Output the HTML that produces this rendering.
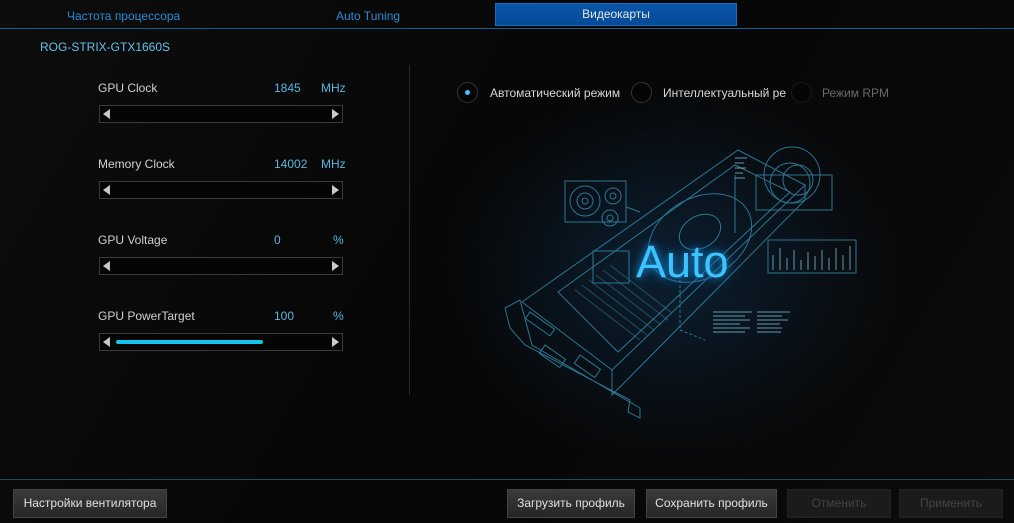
<!DOCTYPE html>
<html><head><meta charset="utf-8"><style>
*{margin:0;padding:0;box-sizing:border-box}
body{width:1014px;height:523px;overflow:hidden;background:#070707;font-family:"Liberation Sans",sans-serif;position:relative;color:#c8c8c8}
.bg{position:absolute;inset:0;background:radial-gradient(ellipse 230px 190px at 670px 270px,#0d2030 0%,#09141e 45%,rgba(7,7,7,0) 100%),linear-gradient(120deg,#0d0d0d,#060606 50%,#0b0b0b)}
.a{position:absolute;white-space:nowrap}
.tab{font-size:12px;color:#2c8ad6;top:9px}
.act{left:495px;top:3px;width:242px;height:23px;background:linear-gradient(#0a56a8,#054a96);border:1px solid #1a6cc0;color:#e6e6e6;font-size:12px;text-align:center;line-height:21px}
.hl{left:0;top:28px;width:1014px;height:1px;background:#1a5a8c}
.lab{font-size:12px;color:#cfcfcf;left:98px}
.val{font-size:12px;color:#55b8e0}
.sl{left:99px;width:244px;height:18px;border:1px solid #3a3a3a;background:#050505}
.sl:before{content:"";position:absolute;left:3px;top:3px;border-right:7px solid #c8c8c8;border-top:5px solid transparent;border-bottom:5px solid transparent}
.sl:after{content:"";position:absolute;right:3px;top:3px;border-left:7px solid #c8c8c8;border-top:5px solid transparent;border-bottom:5px solid transparent}
.rad{width:21px;height:21px;border-radius:50%;border:1px solid #333;background:#050505}
.rt{font-size:12px;top:86px}
.btn{top:489px;height:29px;background:linear-gradient(#3a3a3a,#262626);border:1px solid #444;font-size:12px;color:#e0e0e0;text-align:center;line-height:27px}
.dis{background:#1b1b1b;border-color:#222;color:#444}
</style></head><body>
<div class="bg"></div>
<div class="a tab" style="left:67px">Частота процессора</div>
<div class="a tab" style="left:336px">Auto Tuning</div>
<div class="a act">Видеокарты</div>
<div class="a hl"></div>
<div class="a" style="left:40px;top:40px;font-size:12px;color:#66c0e8">ROG-STRIX-GTX1660S</div>

<div class="a lab" style="top:81px">GPU Clock</div><div class="a val" style="left:274px;top:81px">1845</div><div class="a val" style="left:321px;top:81px">MHz</div>
<div class="a sl" style="top:105px"></div>
<div class="a lab" style="top:157px">Memory Clock</div><div class="a val" style="left:274px;top:157px">14002</div><div class="a val" style="left:321px;top:157px">MHz</div>
<div class="a sl" style="top:181px"></div>
<div class="a lab" style="top:233px">GPU Voltage</div><div class="a val" style="left:274px;top:233px">0</div><div class="a val" style="left:333px;top:233px">%</div>
<div class="a sl" style="top:257px"></div>
<div class="a lab" style="top:309px">GPU PowerTarget</div><div class="a val" style="left:274px;top:309px">100</div><div class="a val" style="left:333px;top:309px">%</div>
<div class="a sl" style="top:333px"><div style="position:absolute;left:16px;top:6px;width:147px;height:4px;background:#12c4ea;border-radius:2px"></div></div>

<div class="a" style="left:409px;top:65px;width:1px;height:330px;background:#2a2a2a"></div>

<div class="a rad" style="left:457px;top:82px"><div style="position:absolute;left:7px;top:7px;width:5px;height:5px;border-radius:50%;background:#3cc4ff"></div></div>
<div class="a rt" style="left:490px;color:#d8d8d8">Автоматический режим</div>
<div class="a rad" style="left:631px;top:82px"></div>
<div class="a rt" style="left:663px;color:#d8d8d8">Интеллектуальный ре</div>
<div class="a rad" style="left:791px;top:82px;border-color:#1a1a1a"></div>
<div class="a rt" style="left:822px;color:#6a6a6a">Режим RPM</div>

<svg class="a" style="left:0;top:0" width="1014" height="523" viewBox="0 0 1014 523">
<g fill="none" stroke="#3d9fc4" stroke-width="1" opacity="0.7">
<polygon points="522,302 738,150 805,185 612,370"/>
<polygon points="558,292 735,165 790,192 618,352"/>
<polyline points="612,370 612,395 805,200 805,185"/>
<polyline points="505,308 520,300 532,345 640,408 640,418 628,412 630,400 525,345 510,328 505,308"/>
<rect x="530" y="312" width="30" height="8" transform="rotate(35 530 312)"/>
<rect x="545" y="345" width="25" height="10" transform="rotate(35 545 345)"/>
<rect x="580" y="355" width="25" height="10" transform="rotate(35 580 355)"/>
<ellipse cx="700" cy="238" rx="55" ry="40" transform="rotate(-30 700 238)"/>
<ellipse cx="700" cy="232" rx="22" ry="16" transform="rotate(-30 700 232)"/>
<rect x="565" y="181" width="61" height="41"/>
<circle cx="585" cy="201" r="15"/><circle cx="585" cy="201" r="8"/><circle cx="585" cy="201" r="3"/>
<circle cx="613" cy="196" r="8"/><circle cx="613" cy="196" r="3"/>
<circle cx="610" cy="218" r="8"/><circle cx="610" cy="218" r="3"/>
<line x1="626" y1="207" x2="640" y2="212"/>
<rect x="756" y="175" width="76" height="35"/>
<circle cx="792" cy="175" r="28"/><circle cx="790" cy="183" r="20"/><circle cx="798" cy="180" r="15"/>
<line x1="735" y1="175" x2="735" y2="233"/>
<line x1="680" y1="275" x2="680" y2="330" stroke-dasharray="3,2"/>
<line x1="680" y1="330" x2="705" y2="340" stroke-dasharray="3,2"/>
<rect x="593" y="251" width="36" height="32"/>
<rect x="768" y="240" width="88" height="33"/>
<path d="M575 290 L640 340 M582 285 L647 335 M589 280 L654 330 M596 275 L661 325 M603 270 L668 320 M610 265 L672 313" opacity="0.6"/>
</g>
<g stroke="#8fd0e8" stroke-width="1" opacity="0.7">
<line x1="773" y1="270" x2="773" y2="255"/><line x1="780" y1="270" x2="780" y2="248"/><line x1="787" y1="270" x2="787" y2="258"/><line x1="794" y1="270" x2="794" y2="250"/><line x1="801" y1="270" x2="801" y2="260"/><line x1="808" y1="270" x2="808" y2="252"/><line x1="815" y1="270" x2="815" y2="256"/><line x1="822" y1="270" x2="822" y2="250"/><line x1="829" y1="270" x2="829" y2="258"/><line x1="836" y1="270" x2="836" y2="248"/><line x1="843" y1="270" x2="843" y2="255"/><line x1="850" y1="270" x2="850" y2="246"/>
<line x1="713" y1="312" x2="752" y2="312"/><line x1="713" y1="316" x2="745" y2="316"/><line x1="713" y1="320" x2="750" y2="320"/><line x1="713" y1="324" x2="740" y2="324"/><line x1="713" y1="328" x2="750" y2="328"/><line x1="713" y1="332" x2="745" y2="332"/>
<line x1="757" y1="312" x2="790" y2="312"/><line x1="757" y1="316" x2="782" y2="316"/><line x1="757" y1="320" x2="788" y2="320"/><line x1="757" y1="324" x2="780" y2="324"/><line x1="757" y1="328" x2="782" y2="328"/><line x1="757" y1="332" x2="781" y2="332"/>
<line x1="735" y1="158" x2="747" y2="158"/><line x1="735" y1="163" x2="744" y2="163"/><line x1="735" y1="168" x2="746" y2="168"/><line x1="735" y1="173" x2="743" y2="173"/><line x1="735" y1="178" x2="745" y2="178"/>
</g>
</svg>
<div class="a" style="left:636px;top:236px;font-size:45px;color:#3cc4ff;text-shadow:0 0 8px #1a8ad0,0 0 16px #0a5a9a">Auto</div>

<div class="a" style="left:0;top:479px;width:1014px;height:1px;background:#1a4a6c"></div>
<div class="a btn" style="left:13px;width:154px">Настройки вентилятора</div>
<div class="a btn" style="left:507px;width:128px">Загрузить профиль</div>
<div class="a btn" style="left:646px;width:131px">Сохранить профиль</div>
<div class="a btn dis" style="left:787px;width:104px">Отменить</div>
<div class="a btn dis" style="left:899px;width:104px">Применить</div>
</body></html>
